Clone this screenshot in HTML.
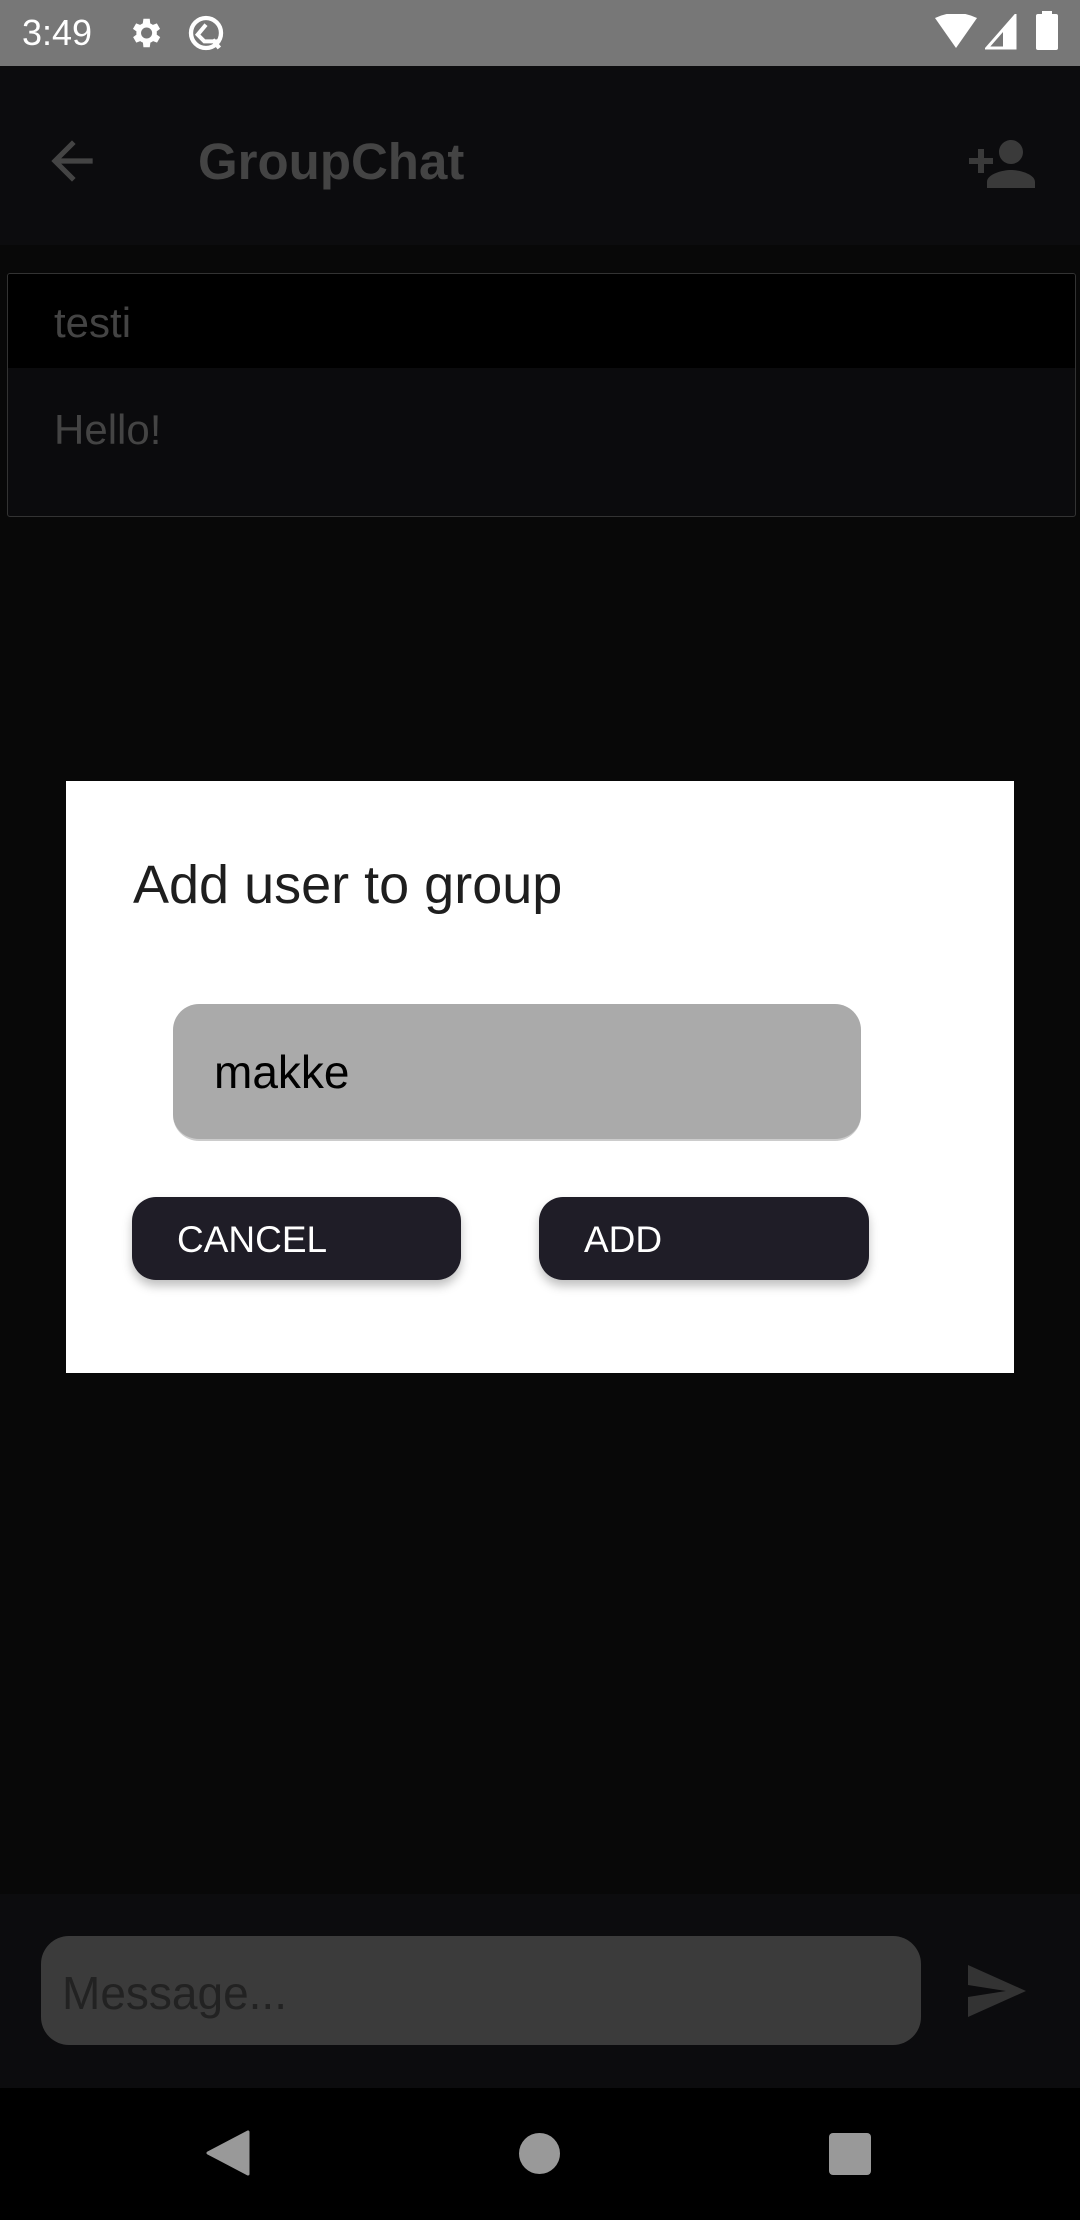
<!DOCTYPE html>
<html><head><meta charset="utf-8"><style>
*{margin:0;padding:0;box-sizing:border-box}
body{width:1080px;height:2220px;background:#080808;font-family:"Liberation Sans",sans-serif;position:relative;overflow:hidden}
.abs{position:absolute}
</style></head><body>
<div class="abs" style="left:0;top:0;width:1080px;height:66px;background:#777"></div>
<div class="abs" style="left:22px;top:10px;font-size:36px;color:#fff;line-height:46px">3:49</div>
<svg class="abs" style="left:126px;top:14px" width="38" height="38" viewBox="0 0 24 24"><path fill="#fff" d="M19.4 13a7.5 7.5 0 000-2l2.1-1.6-2-3.5-2.5 1a7.7 7.7 0 00-1.7-1L15 3h-4l-.4 2.9a7.7 7.7 0 00-1.7 1l-2.5-1-2 3.5L6.6 11a7.5 7.5 0 000 2l-2.1 1.6 2 3.5 2.5-1a7.7 7.7 0 001.7 1L11 21h4l.4-2.9a7.7 7.7 0 001.7-1l2.5 1 2-3.5zM13 15.5a3.5 3.5 0 110-7 3.5 3.5 0 010 7z"/></svg>
<svg class="abs" style="left:186px;top:13px" width="40" height="40" viewBox="0 0 24 24"><circle cx="12" cy="12" r="9" fill="none" stroke="#fff" stroke-width="2.6"/><path d="M12 7l-5 6 4 4h8" fill="none" stroke="#fff" stroke-width="2.4"/><path d="M16 16l4 5" stroke="#fff" stroke-width="2.6"/></svg>
<svg class="abs" style="left:935px;top:14px" width="42" height="36" viewBox="0 0 42 36"><path d="M0 4Q21-6 42 4L21 34Z" fill="#fff"/></svg>
<svg class="abs" style="left:985px;top:14px" width="32" height="36" viewBox="0 0 32 36"><path d="M30 2V34H2Z" fill="none" stroke="#fff" stroke-width="3"/><path d="M30 2V34H18V16Z" fill="#fff"/></svg>
<div class="abs" style="left:1036px;top:14px;width:22px;height:36px;background:#fff;border-radius:2px"></div>
<div class="abs" style="left:1042px;top:11px;width:10px;height:4px;background:#fff"></div>

<div class="abs" style="left:0;top:66px;width:1080px;height:179px;background:#0c0c0e"></div>
<svg class="abs" style="left:41px;top:130px" width="62" height="62" viewBox="0 0 24 24"><path fill="#444" d="M20 11H7.8l5.6-5.6L12 4l-8 8 8 8 1.4-1.4L7.8 13H20z"/></svg>
<div class="abs" style="left:198px;top:132px;font-size:51px;font-weight:bold;color:#444;line-height:60px">GroupChat</div>
<svg class="abs" style="left:966px;top:128px" width="72" height="72" viewBox="0 0 24 24"><path fill="#3a3a3a" d="M15 12c2.2 0 4-1.8 4-4s-1.8-4-4-4-4 1.8-4 4 1.8 4 4 4zm-9-2V7H4v3H1v2h3v3h2v-3h3v-2H6zm9 4c-2.7 0-8 1.3-8 4v2h16v-2c0-2.7-5.3-4-8-4z"/></svg>

<div class="abs" style="left:7px;top:273px;width:1069px;height:244px;background:#0b0b0d;border:1px solid #333;border-radius:3px;overflow:hidden">
<div style="height:94px;background:#000"></div></div>
<div class="abs" style="left:54px;top:298px;font-size:42px;color:#444;line-height:50px">testi</div>
<div class="abs" style="left:54px;top:405px;font-size:42px;color:#444;line-height:50px">Hello!</div>

<div class="abs" style="left:66px;top:781px;width:948px;height:592px;background:#fff"></div>
<div class="abs" style="left:133px;top:855px;font-size:54px;color:#1e1e1e;line-height:60px">Add user to group</div>
<div class="abs" style="left:173px;top:1004px;width:688px;height:137px;background:#aaa;border-radius:26px;border-bottom:2px solid #ccc"></div>
<div class="abs" style="left:214px;top:1044px;font-size:46px;color:#000;line-height:56px">makke</div>
<div class="abs" style="left:132px;top:1197px;width:329px;height:83px;background:#1f1d27;border-radius:24px;box-shadow:0 6px 10px rgba(0,0,0,.25)"></div>
<div class="abs" style="left:177px;top:1218px;font-size:37px;color:#fff;line-height:44px">CANCEL</div>
<div class="abs" style="left:539px;top:1197px;width:330px;height:83px;background:#1f1d27;border-radius:24px;box-shadow:0 6px 10px rgba(0,0,0,.25)"></div>
<div class="abs" style="left:584px;top:1218px;font-size:37px;color:#fff;line-height:44px">ADD</div>

<div class="abs" style="left:0;top:1894px;width:1080px;height:194px;background:#0c0c0e"></div>
<div class="abs" style="left:41px;top:1936px;width:880px;height:109px;background:#3b3b3b;border-radius:28px"></div>
<div class="abs" style="left:62px;top:1966px;font-size:46px;color:#222;line-height:54px">Message...</div>
<svg class="abs" style="left:966px;top:1961px" width="62" height="60" viewBox="0 0 62 60"><path d="M2 4L60 30 2 56V36L40 30 2 24Z" fill="#333"/></svg>

<div class="abs" style="left:0;top:2088px;width:1080px;height:132px;background:#000"></div>
<svg class="abs" style="left:204px;top:2130px" width="46" height="46" viewBox="0 0 46 46"><path d="M44 2V44L4 23Z" fill="#999" stroke="#999" stroke-width="3" stroke-linejoin="round"/></svg>
<div class="abs" style="left:519px;top:2133px;width:41px;height:41px;border-radius:50%;background:#999"></div>
<div class="abs" style="left:829px;top:2133px;width:42px;height:42px;border-radius:4px;background:#999"></div>
</body></html>
